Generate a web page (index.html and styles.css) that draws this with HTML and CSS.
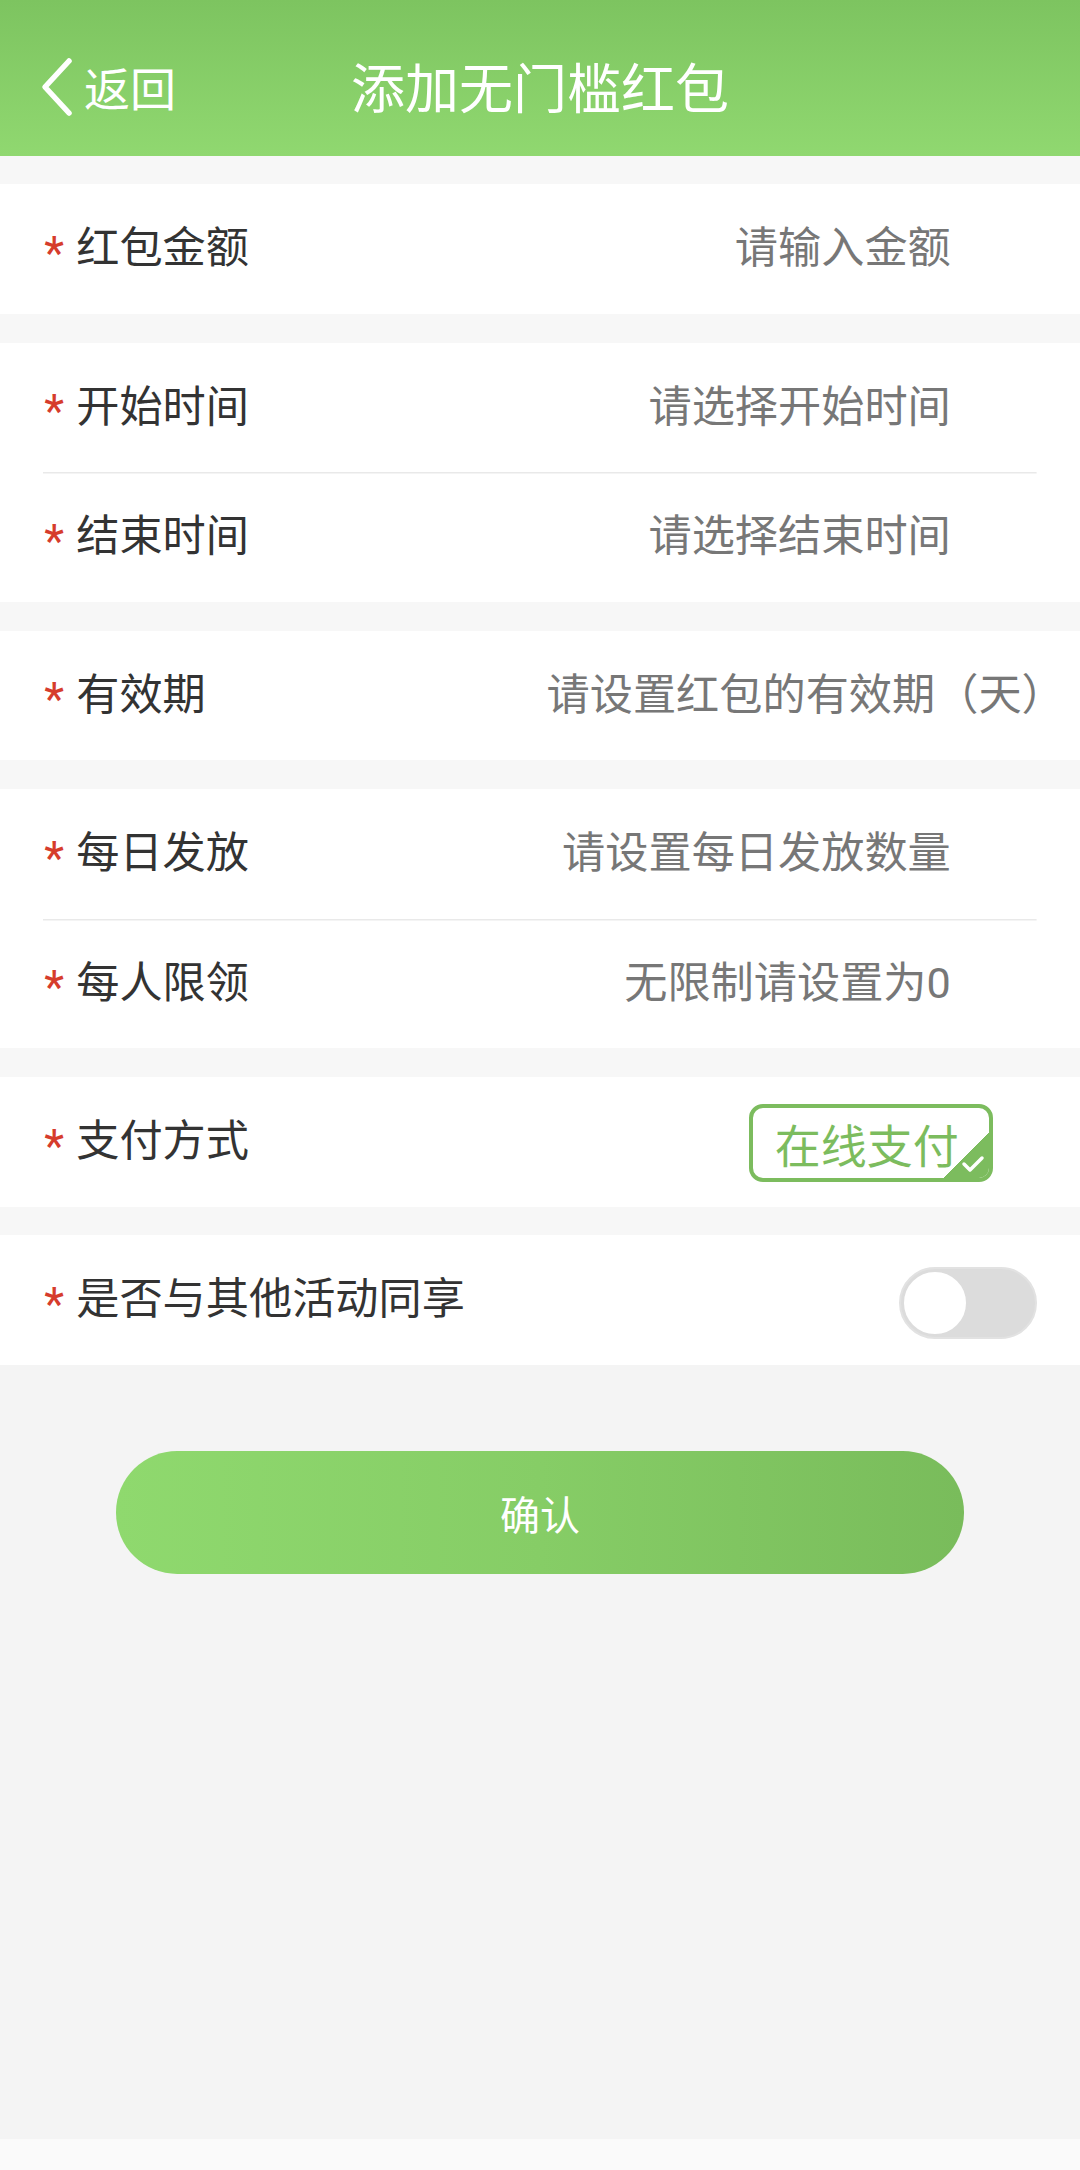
FILE: index.html
```html
<!DOCTYPE html>
<html lang="zh-CN">
<head>
<meta charset="utf-8">
<title>添加无门槛红包</title>
<link rel="stylesheet" href="styles.css">
</head>
<body>
<div class="page">
  <header class="nav">
    <div class="back">
      <svg class="chev" width="34" height="60" viewBox="0 0 34 60"><polyline points="29,4 5,30 29,56" fill="none" stroke="#fff" stroke-width="5.5" stroke-linecap="round" stroke-linejoin="round"/></svg>
      <span>返回</span>
    </div>
    <h1 class="title">添加无门槛红包</h1>
    <div></div>
  </header>

  <main class="form">
    <section class="group">
      <div class="row">
        <span class="label"><i class="star">*</i>红包金额</span>
        <span class="ph">请输入金额</span>
      </div>
    </section>

    <section class="group">
      <div class="row">
        <span class="label"><i class="star">*</i>开始时间</span>
        <span class="ph">请选择开始时间</span>
      </div>
      <div class="row sep">
        <span class="label"><i class="star">*</i>结束时间</span>
        <span class="ph">请选择结束时间</span>
      </div>
    </section>

    <section class="group">
      <div class="row">
        <span class="label"><i class="star">*</i>有效期</span>
        <span class="ph ph-wide">请设置红包的有效期（天）</span>
      </div>
    </section>

    <section class="group">
      <div class="row">
        <span class="label"><i class="star">*</i>每日发放</span>
        <span class="ph">请设置每日发放数量</span>
      </div>
      <div class="row sep">
        <span class="label"><i class="star">*</i>每人限领</span>
        <span class="ph">无限制请设置为0</span>
      </div>
    </section>

    <section class="group">
      <div class="row">
        <span class="label"><i class="star">*</i>支付方式</span>
        <span class="pay">在线支付<span class="corner"><svg width="24" height="18" viewBox="0 0 24 18"><polyline points="3,9 9,15 21,3" fill="none" stroke="#fff" stroke-width="3.5" stroke-linecap="round" stroke-linejoin="round"/></svg></span></span>
      </div>
    </section>

    <section class="group last">
      <div class="row">
        <span class="label"><i class="star">*</i>是否与其他活动同享</span>
        <span class="switch"><span class="knob"></span></span>
      </div>
    </section>
  </main>

  <div class="actions">
    <button class="confirm" type="button">确认</button>
  </div>
</div>
</body>
</html>
```

FILE: styles.css
```css
* {
  box-sizing: border-box;
}

html, body {
  margin: 0;
  padding: 0;
}

body {
  background: #fafafa;
  font-family: Roboto, "Noto Sans CJK SC", sans-serif;
}

.page {
  min-height: 2139px;
  background: #f4f4f4;
}

.nav {
  height: 155.5px;
  padding-top: 16px;
  background: linear-gradient(180deg, #7dc460 0%, #90d870 100%);
  display: grid;
  grid-template-columns: 1fr auto 1fr;
  align-items: center;
  color: #fff;
}

.back {
  display: flex;
  align-items: center;
  padding-left: 40px;
  font-size: 46px;
  line-height: 1;
}

.back .chev {
  margin-right: 10px;
  margin-top: 2px;
}

.back span {
  font-family: "Noto Sans CJK SC", sans-serif;
}

.title {
  margin: 0;
  font-size: 54px;
  font-weight: normal;
  line-height: 1;
  font-family: "Noto Sans CJK SC", sans-serif;
}

.form {
  background: #f7f7f7;
  padding-top: 28.8px;
  display: flex;
  flex-direction: column;
  gap: 28.8px;
}

.group {
  background: #fff;
}

.row {
  height: 129.6px;
  padding: 0 43.2px;
  display: flex;
  align-items: center;
}

.row.sep {
  background: linear-gradient(#e9e9e9, #e9e9e9) no-repeat 43.2px 0 / calc(100% - 86.4px) 1.5px;
}

.label {
  display: flex;
  align-items: center;
  font-size: 43.2px;
  color: #333;
  line-height: 1.2;
  white-space: nowrap;
  font-family: Roboto, "Noto Sans CJK SC", sans-serif;
}

.star {
  font-style: normal;
  color: #d63c2c;
  font-size: 46px;
  line-height: 1;
  width: 33px;
  padding-left: 1px;
  transform: translateY(4px);
  font-family: Roboto, sans-serif;
}

.ph {
  margin-left: auto;
  margin-right: 86px;
  font-size: 43.2px;
  color: #777;
  line-height: 1.2;
}

.ph-wide {
  margin-right: -28px;
}

.pay {
  margin-left: auto;
  margin-right: 44px;
  margin-top: 3px;
  width: 244px;
  height: 78px;
  border: 4px solid #7cbc5e;
  border-radius: 14px;
  background: #fff;
  color: #7cbc5e;
  font-size: 46px;
  line-height: 70px;
  padding-left: 22px;
  overflow: hidden;
  position: relative;
  white-space: nowrap;
  font-family: "Noto Sans CJK SC", sans-serif;
}

.corner {
  position: absolute;
  right: 0;
  bottom: 0;
  width: 46px;
  height: 46px;
  background: linear-gradient(135deg, transparent 50%, #7cbc5e 50%);
}

.corner svg {
  position: absolute;
  right: 4px;
  bottom: 5px;
}

.switch {
  margin-left: auto;
  margin-top: 6px;
  width: 138px;
  height: 72px;
  border-radius: 36px;
  background: #dcdcdc;
  border: 2px solid #e2e2e2;
  display: flex;
  align-items: center;
  padding-left: 1px;
}

.knob {
  width: 66px;
  height: 66px;
  border-radius: 50%;
  background: #fff;
  border: 2px solid #dcdcdc;
}

.actions {
  padding: 86.4px 116px 0;
}

.confirm {
  display: block;
  width: 100%;
  height: 122.4px;
  border: none;
  border-radius: 61.2px;
  background: linear-gradient(90deg, #8fd96e 0%, #86cd66 50%, #79bc5b 100%);
  color: #fff;
  font-size: 40px;
  font-family: "Noto Sans CJK SC", sans-serif;
  cursor: pointer;
}
```
